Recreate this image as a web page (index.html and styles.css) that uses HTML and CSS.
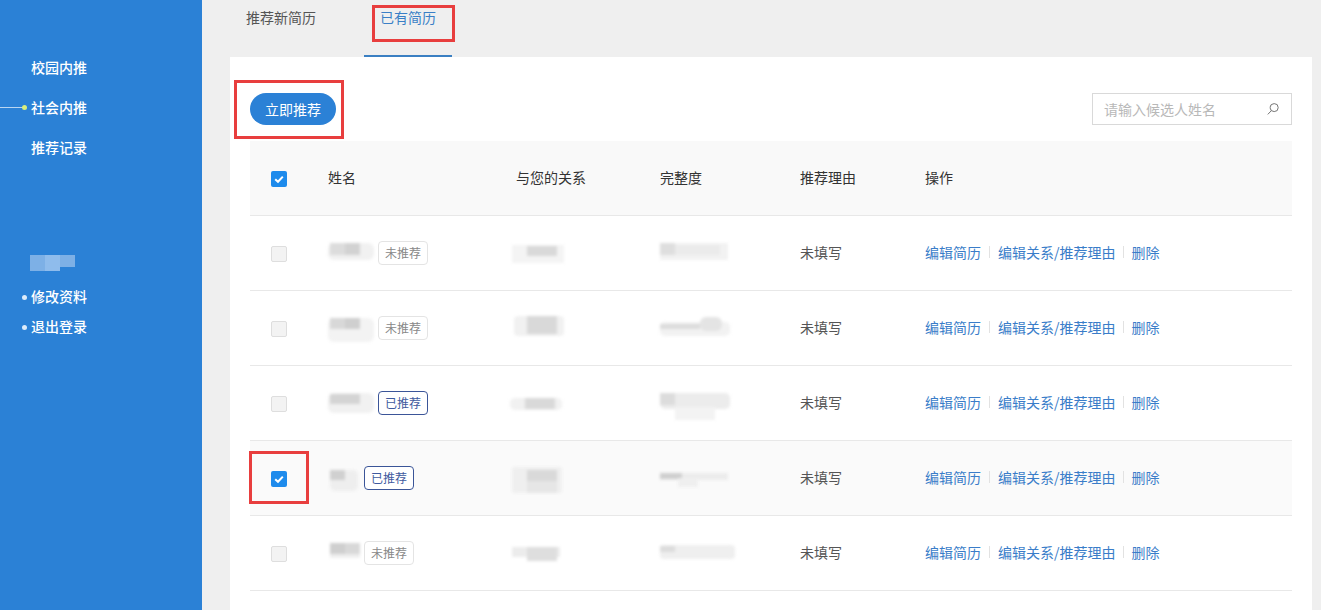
FILE: index.html
```html
<!DOCTYPE html>
<html lang="zh-CN">
<head>
<meta charset="utf-8">
<title>已有简历</title>
<link rel="stylesheet" href="styles.css">
</head>
<body>
<div class="page">
  <aside class="sidebar">
    <nav class="nav">
      <a class="nav-item">校园内推</a>
      <a class="nav-item is-active">社会内推</a>
      <a class="nav-item">推荐记录</a>
    </nav>
    <svg class="user-smudge" width="46" height="16" viewBox="0 0 46 16"><rect width="45" height="16" fill="#7db0e6"/><rect x="15" width="15" height="16" fill="#8fbcec"/><rect x="30" y="12" width="15" height="4" fill="#2b81d6"/></svg>
    <div class="user-links">
      <a class="user-link">修改资料</a>
      <a class="user-link">退出登录</a>
    </div>
  </aside>
  <main class="main">
    <div class="tabs">
      <a class="tab">推荐新简历</a>
      <a class="tab is-current">已有简历</a>
    </div>
    <section class="panel">
      <div class="toolbar">
        <button class="primary-btn">立即推荐</button>
        <div class="search">
          <span class="search-text">请输入候选人姓名</span>
          <svg width="14" height="14" viewBox="0 0 14 14" fill="none" stroke="#777" stroke-width="1"><circle cx="8.2" cy="5.6" r="4"/><path d="M5.4 8.6 1.8 12.4"/></svg>
        </div>
      </div>
      <div class="table">
        <div class="row head">
          <div class="cell-check"><span class="check on"><svg width="16" height="16" viewBox="0 0 16 16"><path d="M4.2 8.2 7 10.8 11.8 5.6" fill="none" stroke="#fff" stroke-width="2"/></svg></span></div>
          <div class="txt">姓名</div><div class="txt">与您的关系</div><div class="txt">完整度</div><div class="txt">推荐理由</div><div class="txt">操作</div>
        </div>

        <div class="row">
          <div class="cell-check"><span class="check"></span></div>
          <div class="name"><svg class="smudge" width="50" height="40" viewBox="0 0 50 40"><rect x="0" y="10" width="46" height="17" rx="6" fill="#f1f1f1"/><rect x="2" y="10" width="30" height="12" fill="#dcdcdc"/><rect x="17" y="10" width="15" height="12" fill="#d2d2d2"/></svg><span class="badge">未推荐</span></div>
          <div><svg class="smudge shift" width="58" height="40" viewBox="0 0 58 40"><rect x="2" y="12" width="52" height="18" fill="#f4f4f4"/><rect x="17" y="13" width="30" height="10" fill="#d9d9d9"/></svg></div>
          <div><svg class="smudge" width="72" height="40" viewBox="0 0 72 40"><rect x="0" y="10" width="68" height="17" fill="#f2f2f2"/><rect x="0" y="10" width="15" height="12" fill="#dedede"/><rect x="15" y="12" width="45" height="10" fill="#ebebeb"/></svg></div>
          <div class="txt">未填写</div>
          <div class="ops"><a>编辑简历</a><i></i><a>编辑关系/推荐理由</a><i></i><a>删除</a></div>
        </div>

        <div class="row">
          <div class="cell-check"><span class="check"></span></div>
          <div class="name"><svg class="smudge" width="50" height="40" viewBox="0 0 50 40"><rect x="0" y="10" width="46" height="24" rx="6" fill="#f3f3f3"/><rect x="2" y="10" width="30" height="11" fill="#d8d8d8"/><rect x="17" y="10" width="15" height="11" fill="#cfcfcf"/></svg><span class="badge">未推荐</span></div>
          <div><svg class="smudge shift" width="58" height="40" viewBox="0 0 58 40"><rect x="4" y="8" width="50" height="20" rx="4" fill="#f1f1f1"/><rect x="17" y="8" width="30" height="18" fill="#d9d9d9"/></svg></div>
          <div><svg class="smudge" width="72" height="40" viewBox="0 0 72 40"><rect x="0" y="14" width="70" height="14" rx="5" fill="#f2f2f2"/><rect x="40" y="9" width="22" height="14" rx="6" fill="#e4e4e4"/><rect x="0" y="16" width="40" height="5" fill="#dcdcdc"/></svg></div>
          <div class="txt">未填写</div>
          <div class="ops"><a>编辑简历</a><i></i><a>编辑关系/推荐理由</a><i></i><a>删除</a></div>
        </div>

        <div class="row">
          <div class="cell-check"><span class="check"></span></div>
          <div class="name"><svg class="smudge" width="50" height="40" viewBox="0 0 50 40"><rect x="0" y="10" width="46" height="20" rx="6" fill="#f1f1f1"/><rect x="2" y="11" width="30" height="10" fill="#d4d4d4"/></svg><span class="badge done">已推荐</span></div>
          <div><svg class="smudge shift" width="58" height="40" viewBox="0 0 58 40"><rect x="0" y="15" width="52" height="12" rx="5" fill="#f1f1f1"/><rect x="15" y="15" width="30" height="11" fill="#d9d9d9"/></svg></div>
          <div><svg class="smudge" width="72" height="40" viewBox="0 0 72 40"><rect x="0" y="10" width="70" height="16" rx="5" fill="#ececec"/><rect x="0" y="10" width="15" height="12" fill="#dcdcdc"/><rect x="15" y="24" width="40" height="13" fill="#f3f3f3"/></svg></div>
          <div class="txt">未填写</div>
          <div class="ops"><a>编辑简历</a><i></i><a>编辑关系/推荐理由</a><i></i><a>删除</a></div>
        </div>

        <div class="row selected">
          <div class="cell-check"><span class="check on"><svg width="16" height="16" viewBox="0 0 16 16"><path d="M4.2 8.2 7 10.8 11.8 5.6" fill="none" stroke="#fff" stroke-width="2"/></svg></span></div>
          <div class="name"><svg class="smudge" width="36" height="40" viewBox="0 0 36 40"><rect x="2" y="12" width="28" height="21" rx="5" fill="#eeeeee"/><rect x="2" y="12" width="15" height="10" fill="#d0d0d0"/></svg><span class="badge done">已推荐</span></div>
          <div><svg class="smudge shift" width="58" height="40" viewBox="0 0 58 40"><rect x="2" y="9" width="50" height="26" rx="3" fill="#efefef"/><rect x="17" y="12" width="30" height="11" fill="#d9d9d9"/><rect x="17" y="23" width="30" height="12" fill="#e6e6e6"/></svg></div>
          <div><svg class="smudge" width="72" height="40" viewBox="0 0 72 40"><rect x="0" y="15" width="68" height="7" fill="#ececec"/><rect x="0" y="15" width="22" height="6" fill="#cfcfcf"/><rect x="18" y="20" width="20" height="9" fill="#efefef"/></svg></div>
          <div class="txt">未填写</div>
          <div class="ops"><a>编辑简历</a><i></i><a>编辑关系/推荐理由</a><i></i><a>删除</a></div>
        </div>

        <div class="row">
          <div class="cell-check"><span class="check"></span></div>
          <div class="name"><svg class="smudge" width="36" height="40" viewBox="0 0 36 40"><rect x="2" y="10" width="30" height="15" fill="#eeeeee"/><rect x="2" y="10" width="15" height="11" fill="#cfcfcf"/><rect x="17" y="10" width="15" height="11" fill="#d8d8d8"/></svg><span class="badge">未推荐</span></div>
          <div><svg class="smudge shift" width="58" height="40" viewBox="0 0 58 40"><rect x="2" y="14" width="48" height="10" fill="#ececec"/><rect x="17" y="14" width="30" height="14" fill="#dedede"/></svg></div>
          <div><svg class="smudge" width="76" height="40" viewBox="0 0 76 40"><rect x="0" y="12" width="75" height="14" rx="4" fill="#efefef"/><rect x="0" y="13" width="15" height="6" fill="#dcdcdc"/></svg></div>
          <div class="txt">未填写</div>
          <div class="ops"><a>编辑简历</a><i></i><a>编辑关系/推荐理由</a><i></i><a>删除</a></div>
        </div>
      </div>
    </section>
  </main>
  <span class="mark mark-tab"></span>
  <span class="mark mark-btn"></span>
  <span class="mark mark-check"></span>
</div>
</body>
</html>
```
FILE: styles.css
```css
* { box-sizing: border-box; }
html, body { margin: 0; height: 100%; overflow: hidden; }
body {
  background: #efefef;
  font-family: "Noto Sans CJK SC", "Liberation Sans", sans-serif;
  font-size: 14px;
  color: #333;
}
.page { position: relative; display: flex; height: 610px; overflow: hidden; }

/* sidebar */
.sidebar { width: 202px; flex: none; background: #2b81d6; color: #fff; padding-top: 48px; }
.nav { display: flex; flex-direction: column; }
.nav-item { position: relative; height: 40px; line-height: 38px; padding-left: 31px; font-weight: 500; }
.nav-item.is-active::before {
  content: ""; position: absolute; left: 0; top: 19px; width: 23px; height: 1px; background: #b9d6f2;
}
.nav-item.is-active::after {
  content: ""; position: absolute; left: 22px; top: 17px; width: 5px; height: 5px; border-radius: 50%; background: #d9ee7c;
}
.user-smudge { display: block; margin: 87px 0 0 30px; filter: blur(.6px); }
.user-links { display: flex; flex-direction: column; margin-top: 11px; }
.user-link { position: relative; height: 30px; line-height: 28px; padding-left: 31px; font-weight: 500; }
.user-link::before {
  content: ""; position: absolute; left: 22px; top: 13px; width: 5px; height: 5px; border-radius: 50%; background: #dcebfa;
}

/* main */
.main { flex: 1; min-width: 0; margin: 0 9px 0 28px; display: flex; flex-direction: column; }
.tabs { display: flex; height: 57px; gap: 32px; flex: none; }
.tab { width: 102px; padding: 6px 16px 0; line-height: 22px; color: #555; border-bottom: 2px solid transparent; }
.tab.is-current { width: 88px; color: #3a7fc6; border-bottom-color: #3a7fc2; }
.panel { flex: 1; background: #fff; padding: 36px 20px 0; }
.toolbar { display: flex; justify-content: space-between; height: 32px; margin-bottom: 16px; }
.primary-btn {
  width: 86px; height: 32px; padding: 0; border: 0; border-radius: 16px; background: #2b81d6; color: #fff;
  font: inherit;
}
.search {
  width: 200px; height: 32px; border: 1px solid #d9d9d9; display: flex; align-items: center;
  justify-content: space-between; padding: 0 11px;
}
.search-text { color: #b8b8b8; }

/* table */
.row {
  display: grid; grid-template-columns: 78px 188px 144px 140px 125px 1fr; align-items: center;
  height: 75px; border-bottom: 1px solid #e8e8e8; color: #555;
}
.row.head { background: #f9f9f9; color: #333; }
.row.selected { background: #fafafa; }
.txt { padding-bottom: 2px; }
.cell-check { padding: 1px 0 0 21px; display: flex; }
.check {
  display: block; width: 16px; height: 16px; border-radius: 2px; background: #f3f3f3; border: 1px solid #dedede;
}
.check.on { background: #1e8bec; border: 0; }
.check svg { display: block; }
.name { display: flex; align-items: center; }
.smudge { display: block; filter: blur(1.5px); }
.smudge.shift { margin-left: -6px; }
.badge {
  width: 50px; height: 24px; line-height: 22px; text-align: center; font-size: 12px; color: #888;
  border: 1px solid #e4e4e4; border-radius: 4px; background: #fff;
}
.badge.done { color: #3f5a9e; border-color: #3b5598; }
.ops { display: flex; align-items: center; color: #3a7dc9; white-space: nowrap; padding-bottom: 2px; }
.ops a:nth-child(3) { margin-right: -1px; }
.ops i { width: 1px; height: 12px; background: #e2e2e2; margin: 0 8px; }

/* red annotation frames */
.mark { position: absolute; border: 3px solid #e83e3e; }
.mark-tab { left: 372px; top: 5px; width: 83px; height: 37px; }
.mark-btn { left: 234px; top: 80px; width: 110px; height: 59px; }
.mark-check { left: 249px; top: 451px; width: 60px; height: 53px; }
```
